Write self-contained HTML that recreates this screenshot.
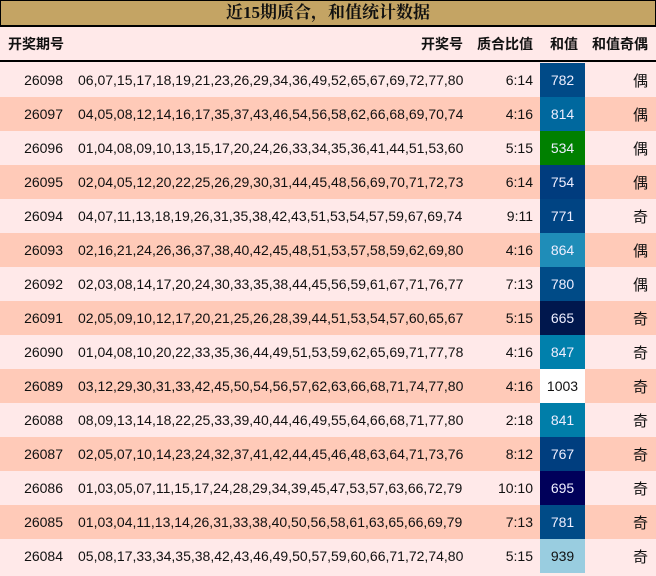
<!DOCTYPE html>
<html><head><meta charset="utf-8"><style>
*{margin:0;padding:0;box-sizing:border-box}
body{width:656px;height:574px;overflow:hidden;background:#ffe9e9;font-family:"Liberation Sans","Noto Sans CJK SC",sans-serif;font-size:14px;color:#111;position:relative}
.t{position:absolute;left:0;top:0;width:656px;height:27px;background:#c4a464;border:1px solid #000;border-bottom:2px solid #000;text-align:center;font-weight:bold;font-size:17px;line-height:24px;font-family:"Liberation Serif","Noto Serif CJK SC",serif}
.h{position:absolute;top:27px;left:0;width:656px;height:35px;border-bottom:2px solid #000;font-weight:bold;font-size:14px;background:#ffe9e9}
.r{position:absolute;left:0;width:656px;height:34px;line-height:34px}
.c{position:absolute;top:0;height:34px;white-space:nowrap}
.a{right:593px;text-align:right}
.b{left:78px}
.d{right:123px;text-align:right}
.e{left:540px;width:45px;text-align:center;color:#eef}
.f{right:8px;font-size:15px;line-height:37px}
.h .c{line-height:35px}
</style></head><body>
<div class="t">近15期质合，和值统计数据</div>
<div class="h">
<div class="c" style="left:8px">开奖期号</div>
<div class="c" style="right:193px">开奖号</div>
<div class="c" style="right:123px">质合比值</div>
<div class="c" style="left:550px">和值</div>
<div class="c" style="right:8px">和值奇偶</div>
</div>
<div class="r" style="top:63px;background:#ffe9e9"><div class="c a">26098</div><div class="c b">06,07,15,17,18,19,21,23,26,29,34,36,49,52,65,67,69,72,77,80</div><div class="c d">6:14</div><div class="c e" style="background:#004a87">782</div><div class="c f">偶</div></div>
<div class="r" style="top:97px;background:#ffcab8"><div class="c a">26097</div><div class="c b">04,05,08,12,14,16,17,35,37,43,46,54,56,58,62,66,68,69,70,74</div><div class="c d">4:16</div><div class="c e" style="background:#00689e">814</div><div class="c f">偶</div></div>
<div class="r" style="top:131px;background:#ffe9e9"><div class="c a">26096</div><div class="c b">01,04,08,09,10,13,15,17,20,24,26,33,34,35,36,41,44,51,53,60</div><div class="c d">5:15</div><div class="c e" style="background:#008000">534</div><div class="c f">偶</div></div>
<div class="r" style="top:165px;background:#ffcab8"><div class="c a">26095</div><div class="c b">02,04,05,12,20,22,25,26,29,30,31,44,45,48,56,69,70,71,72,73</div><div class="c d">6:14</div><div class="c e" style="background:#003c7e">754</div><div class="c f">偶</div></div>
<div class="r" style="top:199px;background:#ffe9e9"><div class="c a">26094</div><div class="c b">04,07,11,13,18,19,26,31,35,38,42,43,51,53,54,57,59,67,69,74</div><div class="c d">9:11</div><div class="c e" style="background:#004483">771</div><div class="c f">奇</div></div>
<div class="r" style="top:233px;background:#ffcab8"><div class="c a">26093</div><div class="c b">02,16,21,24,26,36,37,38,40,42,45,48,51,53,57,58,59,62,69,80</div><div class="c d">4:16</div><div class="c e" style="background:#1f8db8">864</div><div class="c f">偶</div></div>
<div class="r" style="top:267px;background:#ffe9e9"><div class="c a">26092</div><div class="c b">02,03,08,14,17,20,24,30,33,35,38,44,45,56,59,61,67,71,76,77</div><div class="c d">7:13</div><div class="c e" style="background:#004b87">780</div><div class="c f">偶</div></div>
<div class="r" style="top:301px;background:#ffcab8"><div class="c a">26091</div><div class="c b">02,05,09,10,12,17,20,21,25,26,28,39,44,51,53,54,57,60,65,67</div><div class="c d">5:15</div><div class="c e" style="background:#00174d">665</div><div class="c f">奇</div></div>
<div class="r" style="top:335px;background:#ffe9e9"><div class="c a">26090</div><div class="c b">01,04,08,10,20,22,33,35,36,44,49,51,53,59,62,65,69,71,77,78</div><div class="c d">4:16</div><div class="c e" style="background:#0080ac">847</div><div class="c f">奇</div></div>
<div class="r" style="top:369px;background:#ffcab8"><div class="c a">26089</div><div class="c b">03,12,29,30,31,33,42,45,50,54,56,57,62,63,66,68,71,74,77,80</div><div class="c d">4:16</div><div class="c e" style="background:#fff;color:#111">1003</div><div class="c f">奇</div></div>
<div class="r" style="top:403px;background:#ffe9e9"><div class="c a">26088</div><div class="c b">08,09,13,14,18,22,25,33,39,40,44,46,49,55,64,66,68,71,77,80</div><div class="c d">2:18</div><div class="c e" style="background:#007ea9">841</div><div class="c f">奇</div></div>
<div class="r" style="top:437px;background:#ffcab8"><div class="c a">26087</div><div class="c b">02,05,07,10,14,23,24,32,37,41,42,44,45,46,48,63,64,71,73,76</div><div class="c d">8:12</div><div class="c e" style="background:#003e7f">767</div><div class="c f">奇</div></div>
<div class="r" style="top:471px;background:#ffe9e9"><div class="c a">26086</div><div class="c b">01,03,05,07,11,15,17,24,28,29,34,39,45,47,53,57,63,66,72,79</div><div class="c d">10:10</div><div class="c e" style="background:#00005a">695</div><div class="c f">奇</div></div>
<div class="r" style="top:505px;background:#ffcab8"><div class="c a">26085</div><div class="c b">01,03,04,11,13,14,26,31,33,38,40,50,56,58,61,63,65,66,69,79</div><div class="c d">7:13</div><div class="c e" style="background:#004b87">781</div><div class="c f">奇</div></div>
<div class="r" style="top:539px;background:#ffe9e9"><div class="c a">26084</div><div class="c b">05,08,17,33,34,35,38,42,43,46,49,50,57,59,60,66,71,72,74,80</div><div class="c d">5:15</div><div class="c e" style="background:#99cde0;color:#111">939</div><div class="c f">奇</div></div>
</body></html>
